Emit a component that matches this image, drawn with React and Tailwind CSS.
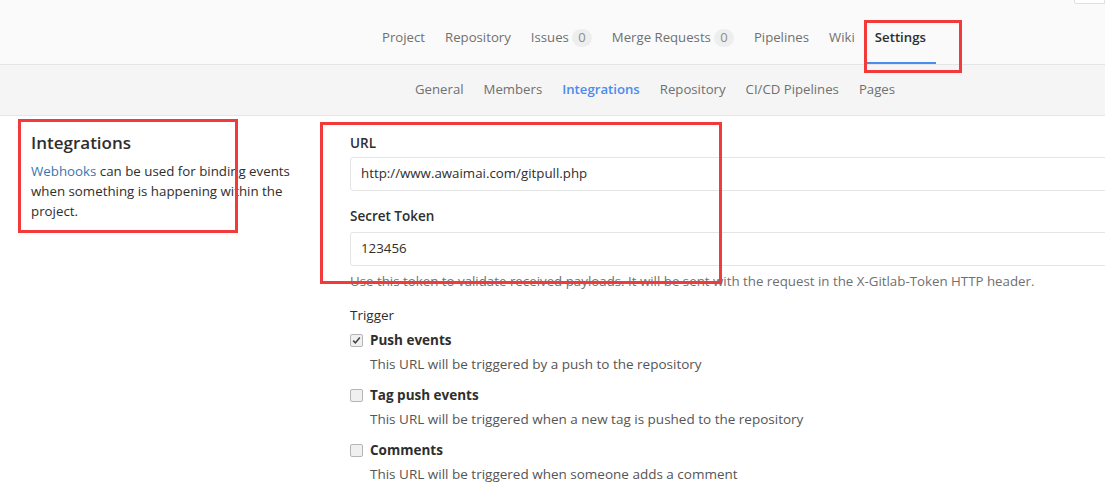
import React from "react";

const font = { fontFamily: '"Open Sans", "Noto Sans", sans-serif' };

function Badge({ n }) {
  return (
    <span className="ml-[3px] inline-flex h-[18px] min-w-[20px] items-center justify-center rounded-full bg-[#eeeeee] px-[6px] text-[13px] leading-none text-[#8c8c8c]">
      {n}
    </span>
  );
}

function Check({ checked }) {
  return (
    <span className="flex h-[13px] w-[13px] items-center justify-center rounded-[2px] border border-[#b5b5b5] bg-[#f0f0f0]">
      {checked && (
        <svg width="9" height="9" viewBox="0 0 9 9">
          <path d="M1.2 4.6 L3.4 6.9 L7.8 1.6" fill="none" stroke="#444" strokeWidth="1.6" />
        </svg>
      )}
    </span>
  );
}

function Trigger({ label, desc, checked }) {
  return (
    <div className="mb-[6px]">
      <div className="flex h-[22px] items-center">
        <Check checked={checked} />
        <span className="ml-[7px] text-[13.5px] font-bold text-[#2e2e2e]">{label}</span>
      </div>
      <div className="ml-[20px] h-[27px] pt-[3px] text-[13.5px] text-[#555]">{desc}</div>
    </div>
  );
}

export default function App() {
  const top = [
    ["Project"],
    ["Repository"],
    ["Issues", 0],
    ["Merge Requests", 0],
    ["Pipelines"],
    ["Wiki"],
  ];
  const sub = ["General", "Members", "Integrations", "Repository", "CI/CD Pipelines", "Pages"];
  return (
    <div className="relative h-[495px] w-[1105px] overflow-hidden bg-white" style={font}>
      {/* top nav */}
      <div className="relative h-[65px] border-b border-[#e5e5e5] bg-[#fafafa]">
        <div className="absolute right-0 top-[-1px] h-[5px] w-[31px] rounded-bl-[2px] border border-[#e0e0e0] bg-white" />
        <div className="flex h-full items-stretch pl-[372px]">
          {top.map(([t, b]) => (
            <div key={t} className="flex items-center px-[10px] pt-[11px] text-[13.2px] text-[#707070]">
              {t}
              {b !== undefined && <Badge n={b} />}
            </div>
          ))}
          <div className="flex items-center border-b-2 border-[#4a8bee] px-[10px] pt-[13px] text-[13.2px] font-semibold text-[#2e2e2e]">
            Settings
          </div>
        </div>
      </div>
      {/* sub nav */}
      <div className="flex h-[51px] items-center border-b border-[#e5e5e5] bg-[#f5f5f5] pl-[405px]">
        {sub.map((t) => (
          <div
            key={t}
            className={
              "px-[10px] text-[13.2px] " +
              (t === "Integrations" ? "font-semibold text-[#4a8bee]" : "text-[#707070]")
            }
          >
            {t}
          </div>
        ))}
      </div>
      {/* body */}
      <div className="flex">
        <div className="w-[319px] shrink-0 pl-[31px] pt-[15px]">
          <h4 className="text-[17px] font-semibold leading-[24px] text-[#2e2e2e]">Integrations</h4>
          <p className="mt-[6px] w-[262px] text-[13.3px] leading-[20px] text-[#2e2e2e]">
            <span className="text-[#3777b0]">Webhooks</span> can be used for binding events when something is happening within the project.
          </p>
        </div>
        <div className="flex-1 pl-[31px] pt-[17px]">
          <div className="text-[13.5px] font-semibold leading-[20px] text-[#2e2e2e]">URL</div>
          <div className="mt-[4px] flex h-[34px] w-[800px] items-center rounded-l-[3px] border border-[#e5e5e5] px-[10px] text-[13.3px] text-[#2e2e2e]">
            http://www.awaimai.com/gitpull.php
          </div>
          <div className="mt-[15px] text-[13.5px] font-semibold leading-[20px] text-[#2e2e2e]">Secret Token</div>
          <div className="mt-[6px] flex h-[34px] w-[800px] items-center rounded-l-[3px] border border-[#e5e5e5] px-[10px] text-[13.3px] text-[#2e2e2e]">
            123456
          </div>
          <div className="mt-[5px] text-[13.3px] leading-[20px] text-[#707070]">
            Use this token to validate received payloads. It will be sent with the request in the X-Gitlab-Token HTTP header.
          </div>
          <div className="mt-[14px] text-[13.5px] leading-[20px] text-[#2e2e2e]">Trigger</div>
          <div className="mt-[4px]">
            <Trigger checked label="Push events" desc="This URL will be triggered by a push to the repository" />
            <Trigger label="Tag push events" desc="This URL will be triggered when a new tag is pushed to the repository" />
            <Trigger label="Comments" desc="This URL will be triggered when someone adds a comment" />
          </div>
        </div>
      </div>
      {/* annotation boxes */}
      <div className="pointer-events-none absolute left-[864px] top-[20px] h-[53px] w-[98px] border-[3px] border-[#f33a3a]" />
      <div className="pointer-events-none absolute left-[18px] top-[119px] h-[114px] w-[220px] border-[3px] border-[#f33a3a]" />
      <div className="pointer-events-none absolute left-[320px] top-[122px] h-[162px] w-[402px] border-[3px] border-[#f33a3a]" />
    </div>
  );
}
